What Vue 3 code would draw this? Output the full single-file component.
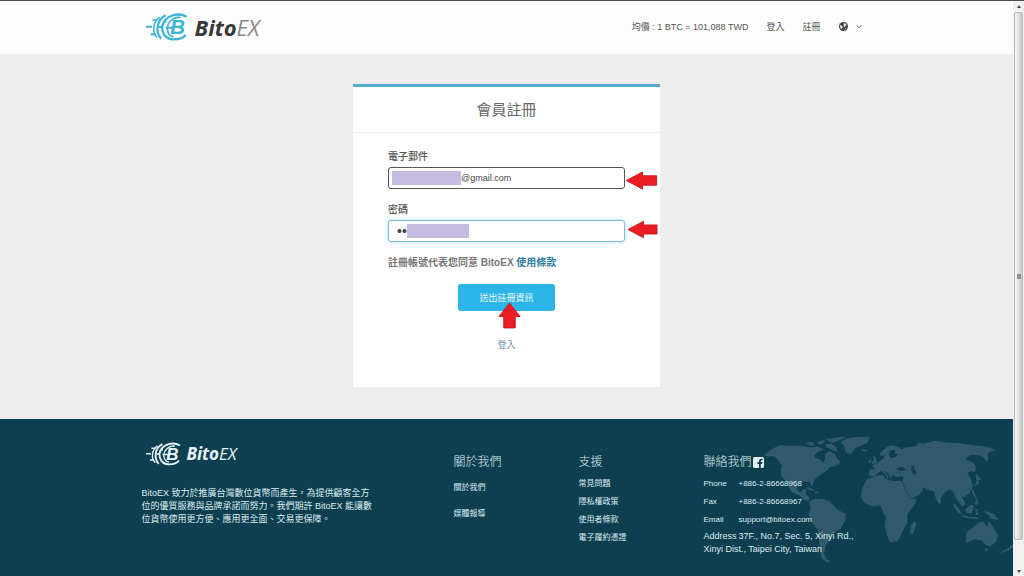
<script setup>
import { ref } from 'vue'

const email = ref('@gmail.com')
const password = ref('ab')

const aboutLinks = ['關於我們', '媒體報導']
const supportLinks = ['常見問題', '隱私權政策', '使用者條款', '電子履約憑證']
const contacts = [
  { label: 'Phone', value: '+886-2-86668968' },
  { label: 'Fax', value: '+886-2-86668967' },
  { label: 'Email', value: 'support@bitoex.com' },
]
</script>

<template>
  <div class="window">
    <div class="page">
      <header class="header">
        <div class="container header-row">
          <a class="logo" href="#" aria-label="BitoEX">
            <svg class="mark" viewBox="0 0 128 84" aria-hidden="true">
              <g fill="none" stroke="currentColor" stroke-width="7">
                <path d="M0 41H18M20 21H34M14 64H30M38 42H48M54 26H62M60 44H84" stroke-width="6" />
                <path d="M42 12C20 28 18 58 34 74" stroke-width="5" />
                <path d="M60 6C32 20 28 56 46 78" />
                <path d="M124 11C98 -4 58 6 50 38C46 60 60 80 84 80C102 80 114 76 121 66" />
                <path d="M106 13C82 10 66 28 65 46C65 60 72 70 84 72" stroke-width="5" />
              </g>
              <text x="74" y="63" class="coin">B</text>
            </svg>
            <span class="word"><b>Bito</b>EX</span>
          </a>
          <nav class="nav">
            <span>均價 : 1 BTC = 101,088 TWD</span>
            <a href="#">登入</a>
            <a href="#">註冊</a>
            <button class="lang" type="button" aria-label="Language">
              <svg class="globe" viewBox="0 0 18 18" aria-hidden="true">
                <circle cx="9" cy="9" r="9" fill="#444" />
                <path d="M9 3L13 3L15 6L13 7L12 10L9 8L10 6ZM3 6L6 8L8 11L6 12L6 14L3 12L2 9ZM12 13L15 11L13 14L11 15Z" fill="#f4f4f4" />
              </svg>
              <svg class="chevron" viewBox="0 0 10 8" aria-hidden="true">
                <path d="M1 2L5 6L9 2" fill="none" stroke="#555" stroke-width="1.6" />
              </svg>
            </button>
          </nav>
        </div>
      </header>

      <main class="main">
        <section class="card">
          <h1 class="title">會員註冊</h1>
          <form class="form" @submit.prevent>
            <label for="email">電子郵件</label>
            <div class="field">
              <input id="email" v-model="email" class="email" type="text" />
              <span class="mask mask-email"></span>
              <svg class="arrow arrow-email" viewBox="0 0 32 18" aria-hidden="true">
                <path d="M0 9L17 0V4H32V14H17V18Z" />
              </svg>
            </div>
            <label for="password">密碼</label>
            <div class="field">
              <input id="password" v-model="password" class="password" type="password" />
              <span class="mask mask-password"></span>
              <svg class="arrow arrow-password" viewBox="0 0 32 18" aria-hidden="true">
                <path d="M0 9L17 0V4H32V14H17V18Z" />
              </svg>
            </div>
            <p class="terms">註冊帳號代表您同意 BitoEX <a href="#">使用條款</a></p>
            <div class="submit-row">
              <button class="submit" type="submit">送出註冊資訊</button>
              <svg class="arrow arrow-submit" viewBox="0 0 22 26" aria-hidden="true">
                <path d="M11 0L22 14H17V26H5V14H0Z" />
              </svg>
            </div>
            <a class="login" href="#">登入</a>
          </form>
        </section>
      </main>

      <footer class="footer">
        <svg class="map" viewBox="0 27 819 471" aria-hidden="true">
          <g fill="#315b6c">
            <path d="M72 136L95 118L118 106L150 108L185 107L205 112L235 110L252 118L234 126L222 136L226 144L240 148L248 158L256 148L254 132L268 124L285 132L292 146L302 158L285 162L290 168L270 170L262 180L240 196L225 208L220 218L217 232L210 218L188 214L174 222L170 238L180 247L192 236L200 240L196 252L208 262L206 274L190 268L178 256L154 246L146 230L138 214L124 198L122 180L126 168L112 148L100 138L84 140Z" />
            <path d="M196 98L214 95L226 104L212 108ZM230 98L248 90L256 96L240 104ZM256 102L274 101L290 112L292 126L276 120L260 112ZM256 88L300 81L318 82L300 90L276 98Z" />
            <path d="M318 86L350 80L390 82L382 98L360 108L346 114L332 132L318 128L312 106L302 97ZM362 119L380 117L384 122L372 125ZM284 156L296 158L298 165L286 162Z" />
            <path d="M196 233L212 233L226 244L208 240ZM224 244L238 247L226 251Z" />
            <path d="M208 274L226 266L250 268L268 274L282 288L294 300L318 312L316 330L302 356L280 370L268 392L256 410L252 432L262 450L274 454L258 457L244 442L238 410L234 360L218 340L206 316L212 296Z" />
            <path d="M380 208L410 198L430 194L434 206L462 214L484 212L496 240L512 268L530 266L526 282L502 312L502 340L488 364L474 392L452 399L442 378L434 348L438 322L428 304L422 286L396 289L374 280L363 262L366 236ZM524 334L529 344L518 374L510 368L512 346Z" />
            <path fill-rule="evenodd" d="M386 196L388 178L406 178L398 166L412 160L426 148L434 144L432 136L442 128L454 120L446 132L450 144L466 142L474 132L464 130L466 120L450 120L434 136L422 138L420 130L432 118L450 106L476 110L484 118L500 112L528 108L534 98L550 102L584 92L620 98L660 100L700 106L740 110L768 120L748 126L742 132L746 144L740 155L728 140L716 134L690 136L676 148L700 158L708 172L704 186L692 184L682 188L694 210L698 230L690 248L672 262L664 258L676 280L668 292L656 276L646 262L640 246L630 238L616 246L604 262L602 280L596 282L588 266L582 244L566 240L546 232L550 240L536 256L514 266L498 242L488 216L490 200L466 200L458 194L452 206L444 190L432 180L446 202L438 208L440 198L424 182L414 188L404 200ZM468 176L484 170L500 180L482 184ZM514 168L524 166L522 174L530 190L522 196L514 182Z" />
            <path d="M398 136L406 140L412 160L394 162L402 150ZM388 150L396 150L392 160L384 158Z" />
            <path d="M706 190L718 200L724 208L714 212L718 220L702 230L710 216ZM696 234L704 250L716 280L704 286L708 266L696 250ZM640 280L650 288L668 314L656 308L642 290ZM666 316L690 320L714 322L714 327L690 325L668 320ZM674 300L692 284L702 286L696 310L682 310ZM706 298L716 296L712 306L718 316L708 314ZM728 304L744 305L762 312L776 330L752 326L744 314Z" />
            <path d="M680 366L700 352L714 338L730 334L740 350L748 332L758 350L774 376L768 396L750 410L734 402L726 392L706 388L680 398L676 394ZM732 415L747 416L738 424ZM778 430L808 412L818 402L819 410L804 422Z" />
          </g>
        </svg>
        <div class="container footer-grid">
          <div class="about">
            <a class="logo logo-light" href="#" aria-label="BitoEX">
              <svg class="mark" viewBox="0 0 128 84" aria-hidden="true">
                <g fill="none" stroke="currentColor" stroke-width="7">
                  <path d="M0 41H18M20 21H34M14 64H30M38 42H48M54 26H62M60 44H84" stroke-width="6" />
                  <path d="M42 12C20 28 18 58 34 74" stroke-width="5" />
                  <path d="M60 6C32 20 28 56 46 78" />
                  <path d="M124 11C98 -4 58 6 50 38C46 60 60 80 84 80C102 80 114 76 121 66" />
                  <path d="M106 13C82 10 66 28 65 46C65 60 72 70 84 72" stroke-width="5" />
                </g>
                <text x="74" y="63" class="coin">B</text>
              </svg>
              <span class="word"><b>Bito</b>EX</span>
            </a>
            <p class="intro">
              BitoEX 致力於推廣台灣數位貨幣而產生，為提供顧客全方<br />位的優質服務與品牌承諾而努力。我們期許 BitoEX 能讓數<br />位貨幣使用更方便、應用更全面、交易更保障。
            </p>
          </div>
          <div>
            <h2>關於我們</h2>
            <ul class="links loose">
              <li v-for="item in aboutLinks" :key="item"><a href="#">{{ item }}</a></li>
            </ul>
          </div>
          <div>
            <h2>支援</h2>
            <ul class="links">
              <li v-for="item in supportLinks" :key="item"><a href="#">{{ item }}</a></li>
            </ul>
          </div>
          <div>
            <h2 class="contact-title">
              聯絡我們
              <svg class="facebook" viewBox="0 0 24 24" aria-hidden="true">
                <path fill-rule="evenodd" d="M4 0H20Q24 0 24 4V20Q24 24 20 24H17V15H20L21 11H17V9Q17 7 19 7H21V4H18Q13 4 13 9V11H10V15H13V24H4Q0 24 0 20V4Q0 0 4 0Z" fill="#e3f1f3" />
              </svg>
            </h2>
            <dl class="contacts">
              <div v-for="item in contacts" :key="item.label">
                <dt>{{ item.label }}</dt>
                <dd>{{ item.value }}</dd>
              </div>
            </dl>
            <address><span class="address-label">Address</span>37F., No.7, Sec. 5, Xinyi Rd.,<br />Xinyi Dist., Taipei City, Taiwan</address>
          </div>
        </div>
      </footer>
    </div>
    <div class="scrollbar" aria-hidden="true">
      <span class="tri up"></span>
      <div class="thumb"><span class="grip"></span></div>
      <span class="tri down"></span>
    </div>
  </div>
</template>

<style>
body {
  margin: 0;
}
</style>

<style scoped>
.window {
  display: flex;
  min-height: 100vh;
  box-sizing: border-box;
  border-top: 1px solid #4e4b4e;
  font-family: "Liberation Sans", "Noto Sans CJK TC", sans-serif;
  font-size: 9px;
  color: #555;
}

.page {
  flex: 1;
  min-width: 0;
  display: flex;
  flex-direction: column;
}

.container {
  width: 72%;
  min-width: 730px;
  max-width: 730px;
  margin: 0 auto;
}

a {
  color: inherit;
  text-decoration: none;
}

.header {
  background: #fdfdfd;
}

.header-row {
  display: flex;
  align-items: center;
  justify-content: space-between;
  box-sizing: border-box;
  height: 53px;
  padding: 0 10px 2px 4px;
}

.logo {
  display: flex;
  align-items: center;
  gap: 7px;
  color: #3db4d2;
}

.mark {
  width: 42px;
  height: 28px;
}

.coin {
  font: italic bold 62px "Liberation Sans", sans-serif;
  fill: currentColor;
}

.word {
  font: italic 22px/26px "Open Sans", sans-serif;
  color: #898989;
}

.word b {
  color: #383838;
}

.nav {
  display: flex;
  align-items: center;
  gap: 18px;
  color: #555;
}

.lang {
  display: flex;
  align-items: center;
  gap: 8px;
  padding: 0;
  border: 0;
  background: none;
}

.globe {
  width: 9px;
  height: 9px;
}

.chevron {
  width: 6px;
  height: 5px;
}

.main {
  flex: 1;
  padding: 30px 0 32px;
  background: #ededed;
}

.card {
  width: 307px;
  margin: 0 auto;
  padding-bottom: 35px;
  border-top: 3px solid #55abc5;
  box-sizing: border-box;
  background: #fff;
}

.title {
  margin: 0;
  padding: 12px 0 11px;
  border-bottom: 1px solid #eee;
  font-size: 15px;
  line-height: 22px;
  font-weight: 400;
  text-align: center;
  color: #666;
}

.form {
  display: flex;
  flex-direction: column;
  padding: 17px 35px 0;
}

.form label {
  font-size: 10px;
  line-height: 14px;
  font-weight: 500;
  margin-bottom: 3px;
}

.field {
  position: relative;
  margin-bottom: 14px;
}

.field input {
  display: block;
  box-sizing: border-box;
  width: 100%;
  height: 22px;
  border: 1px solid #555;
  border-radius: 3px;
  outline: 0;
  background: #fff;
  font: 9px "Liberation Sans", "Noto Sans CJK TC", sans-serif;
  color: #444;
}

.field .email {
  padding: 0 8px 0 72px;
}

.field .password {
  padding: 0 8px;
  border-color: #7bbfe2;
  box-shadow: 0 0 4px #a9dcf0;
  font-size: 14px;
}

.mask {
  position: absolute;
  height: 14px;
  background: #c6bce2;
}

.mask-email {
  left: 4px;
  top: 4px;
  width: 69px;
}

.mask-password {
  left: 19px;
  top: 4px;
  width: 62px;
}

.arrow {
  position: absolute;
  fill: #ec1c24;
  stroke: #c9151c;
  stroke-width: 1;
  stroke-linejoin: round;
  overflow: visible;
}

.arrow-email,
.arrow-password {
  width: 31px;
  height: 17px;
  top: 5px;
  right: -32px;
}

.arrow-password {
  width: 29px;
  top: 1px;
}

.terms {
  margin: 0 0 14px;
  font-size: 10px;
  line-height: 14px;
  font-weight: bold;
  white-space: nowrap;
  color: #777;
}

.terms a {
  color: #2d7da3;
}

.submit-row {
  position: relative;
  align-self: center;
}

.submit {
  display: block;
  height: 27px;
  padding: 0 21px;
  border: 0;
  border-radius: 3px;
  background: #2cb5e8;
  font: 9px "Liberation Sans", "Noto Sans CJK TC", sans-serif;
  color: #f2fbff;
}

.arrow-submit {
  width: 21px;
  height: 25px;
  left: 41px;
  top: 19px;
}

.login {
  align-self: center;
  margin-top: 27px;
  line-height: 14px;
  color: #68909f;
}

.footer {
  position: relative;
  min-height: 157px;
  background: #0d3f51;
  color: #dcebef;
}

.map {
  position: absolute;
  right: 0;
  top: 0;
  width: 273px;
  height: 157px;
}

.footer-grid {
  position: relative;
  display: grid;
  grid-template-columns: 312px 125px 125px 1fr;
  padding-top: 22px;
}

.logo-light {
  gap: 6px;
  margin-left: 4px;
  color: #e6f4f7;
}

.logo-light .mark {
  width: 35px;
  height: 24px;
}

.logo-light .word {
  font-size: 17px;
  line-height: 26px;
  font-weight: 500;
}

.logo-light .word,
.logo-light .word b {
  color: #e6f4f7;
}

.intro {
  margin: 20px 0 0;
  line-height: 13px;
  white-space: nowrap;
}

h2 {
  margin: 13px 0 0;
  font-size: 12px;
  line-height: 16px;
  font-weight: 300;
}

.contact-title {
  display: flex;
  align-items: center;
  gap: 1px;
}

.facebook {
  width: 11px;
  height: 11px;
}

.links {
  margin: 5px 0 0;
  padding: 0;
  list-style: none;
  font-size: 8px;
  line-height: 18px;
}

.loose {
  line-height: 26px;
}

.contacts {
  margin: 5px 0 0;
  font-size: 8px;
  line-height: 18px;
}

.contacts div {
  display: flex;
}

.contacts dt,
.address-label {
  width: 35px;
}

.contacts dd {
  margin: 0;
}

.address-label {
  display: inline-block;
}

address {
  margin-top: 1px;
  font-style: normal;
  line-height: 13px;
  white-space: nowrap;
}

.scrollbar {
  display: flex;
  flex-direction: column;
  align-items: center;
  width: 11px;
  background: #f1f1f1;
}

.tri {
  margin: 4px 0;
  border: 2px solid transparent;
}

.up {
  border-top: 0;
  border-bottom: 3px solid #444;
}

.down {
  margin: 30px 0 3px;
  border-bottom: 0;
  border-top: 3px solid #444;
}

.thumb {
  flex: 1;
  display: flex;
  align-items: center;
  justify-content: center;
  width: 9px;
  box-sizing: border-box;
  border: 1px solid #bbb;
  border-radius: 2px;
  background: linear-gradient(90deg, #f5f5f5, #e2e2e4 50%, #c4c4c8);
}

.grip {
  width: 4px;
  height: 5px;
  background: #909094;
}
</style>
